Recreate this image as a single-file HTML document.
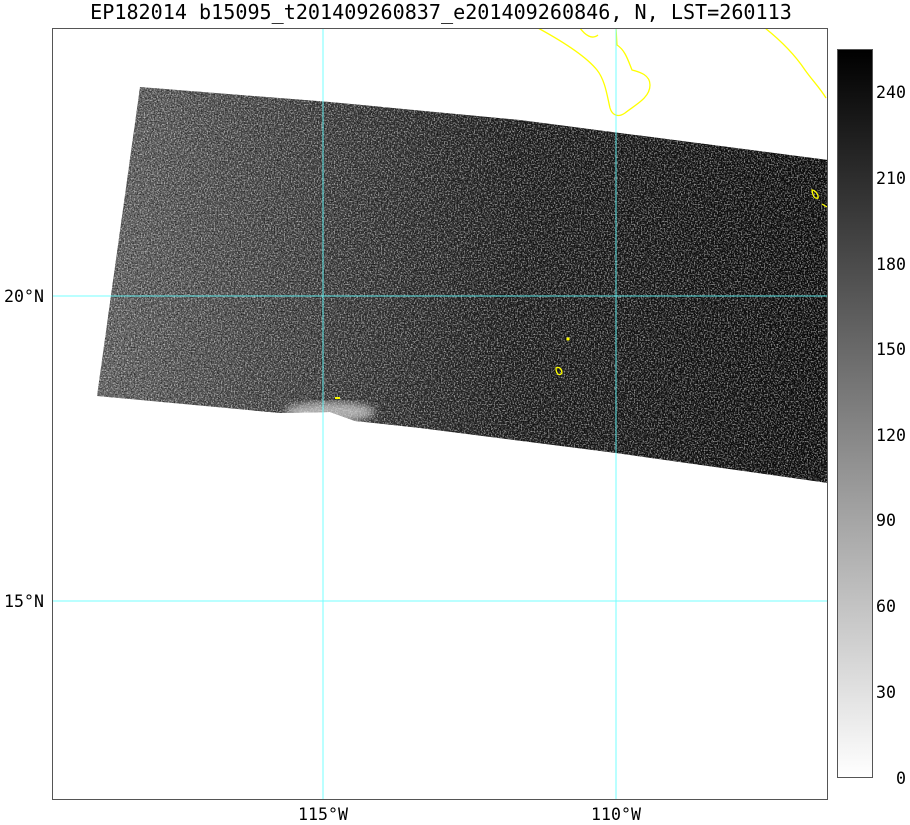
<!DOCTYPE html>
<html><head><meta charset="utf-8"><style>
html,body{margin:0;padding:0;background:#fff;}
svg{display:block;font-family:"DejaVu Sans Mono","Liberation Mono",monospace;}
</style></head><body>
<svg width="910" height="825" viewBox="0 0 910 825" xmlns="http://www.w3.org/2000/svg">
<defs>
<linearGradient id="bg" x1="0" y1="0" x2="1" y2="0">
<stop offset="0" stop-color="#6c6c6c"/>
<stop offset="0.3" stop-color="#444"/>
<stop offset="0.6" stop-color="#1c1c1c"/>
<stop offset="1" stop-color="#0a0a0a"/>
</linearGradient>
<linearGradient id="cb" x1="0" y1="1" x2="0" y2="0">
<stop offset="0" stop-color="#fff"/>
<stop offset="1" stop-color="#000"/>
</linearGradient>
<filter id="nzw" x="0" y="0" width="100%" height="100%">
<feTurbulence type="fractalNoise" baseFrequency="0.7" numOctaves="2" seed="3"/>
<feColorMatrix type="matrix" values="0 0 0 0 1  0 0 0 0 1  0 0 0 0 1  3.5 0 0 0 -1.6"/>
</filter>
<filter id="nzb" x="0" y="0" width="100%" height="100%">
<feTurbulence type="fractalNoise" baseFrequency="0.7" numOctaves="2" seed="11"/>
<feColorMatrix type="matrix" values="0 0 0 0 0  0 0 0 0 0  0 0 0 0 0  3.5 0 0 0 -1.6"/>
</filter>
<filter id="blur"><feGaussianBlur stdDeviation="4"/></filter>
<clipPath id="sw"><path d="M140,87 L330,102 L520,120 L828,160 L828,483 L616,453 L420,428 L355,421 L330,412 L280,413 L97,396 Z"/></clipPath>
<clipPath id="plot"><rect x="52" y="28" width="776" height="772"/></clipPath>
</defs>
<text x="441" y="19" font-size="20.1" text-anchor="middle" fill="#000">EP182014 b15095_t201409260837_e201409260846, N, LST=260113</text>
<g clip-path="url(#sw)">
<rect x="52" y="28" width="776" height="772" fill="url(#bg)"/>
<rect x="52" y="28" width="776" height="772" filter="url(#nzb)" opacity="0.55"/>
<rect x="52" y="28" width="776" height="772" filter="url(#nzw)" opacity="0.55"/>
<ellipse cx="330" cy="412" rx="45" ry="10" fill="#ddd" opacity="0.7" filter="url(#blur)"/>
</g>
<g clip-path="url(#plot)" fill="none" stroke="#ffff00" stroke-width="1.3">
<path d="M538,28 C560,40 585,55 597,70 C605,80 607,95 610,108 C612,115 618,118 625,113 C635,105 650,98 650,85 C650,75 640,72 632,70 C628,60 625,50 617,45 L616,28"/>
<path d="M580,28 C585,35 592,40 598,35"/>
<path d="M765,28 C780,40 795,55 805,70 C812,80 820,88 826,98"/>
<path d="M812,190 c3,0 7,5 6,8 c-3,1 -5,-1 -6,-8 z"/>
<path d="M822,204 l5,3"/>
<circle cx="568" cy="339" r="1" fill="#ff0"/>
<path d="M556,368 c4,-2 6,2 6,5 c-2,3 -6,2 -6,-5 z"/>
<path d="M335,398 h5" stroke-width="2"/>
</g>
<g stroke="#66ffff" stroke-width="1" opacity="0.9">
<line x1="323" y1="28" x2="323" y2="800"/>
<line x1="616" y1="28" x2="616" y2="800"/>
<line x1="52" y1="296" x2="828" y2="296"/>
<line x1="52" y1="601" x2="828" y2="601"/>
</g>
<rect x="52.5" y="28.5" width="775" height="771" fill="none" stroke="#555" stroke-width="1"/>
<g font-size="16.6" fill="#000">
<text x="4" y="302">20°N</text>
<text x="4" y="607">15°N</text>
<text x="323" y="820" text-anchor="middle">115°W</text>
<text x="616" y="820" text-anchor="middle">110°W</text>
</g>
<rect x="837.5" y="49.5" width="35" height="728" fill="url(#cb)" stroke="#555" stroke-width="1"/>
<g font-size="16.6" fill="#000">
<text x="876" y="98">240</text>
<text x="876" y="184">210</text>
<text x="876" y="270">180</text>
<text x="876" y="355">150</text>
<text x="876" y="441">120</text>
<text x="876" y="526">90</text>
<text x="876" y="612">60</text>
<text x="876" y="698">30</text>
<text x="896" y="784">0</text>
</g>
</svg>
</body></html>
